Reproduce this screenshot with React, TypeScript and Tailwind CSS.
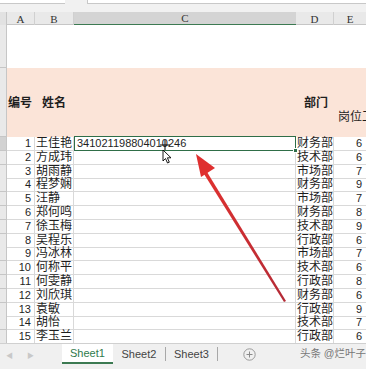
import React from "react";

const rows: [string, string, string][] = [
  ["王佳艳", "财务部", "6"],
  ["方成玮", "技术部", "6"],
  ["胡雨静", "市场部", "7"],
  ["程梦娴", "财务部", "9"],
  ["汪静", "市场部", "7"],
  ["郑何鸣", "财务部", "8"],
  ["徐玉梅", "技术部", "9"],
  ["吴程乐", "行政部", "6"],
  ["冯冰林", "市场部", "7"],
  ["何称平", "技术部", "6"],
  ["何雯静", "行政部", "8"],
  ["刘欣琪", "财务部", "6"],
  ["袁敏", "行政部", "9"],
  ["胡怡", "技术部", "7"],
  ["李玉兰", "行政部", "6"],
];

const font = { fontFamily: '"Liberation Sans","Noto Sans CJK SC",sans-serif' };

export default function App() {
  return (
    <div
      className="relative w-[366px] h-[369px] overflow-hidden bg-white text-[#1e1e1e]"
      style={font}
    >
      {/* top strip */}
      <div className="h-[12px] bg-[#f1f1f1] flex items-start gap-[22px]">
        <div className="w-[65px] h-[4px] bg-white border-b border-[#c8c8c8]" />
        <div className="flex-1 h-[4px] bg-white border-b border-[#c8c8c8] border-l" />
      </div>
      {/* column header */}
      <div
        className="grid grid-cols-[7px_28px_39px_222px_38px_1fr] h-[13px] bg-[#e9e9e9] border-b border-[#c6c6c6] text-[11px] leading-[12px] text-[#333]"
        style={{ fontFamily: '"Liberation Serif",serif' }}
      >
        <div className="border-r border-[#c6c6c6] bg-[#e2e2e2]" />
        <div className="border-r border-[#d0d0d0] flex items-center justify-center">A</div>
        <div className="border-r border-[#d0d0d0] flex items-center justify-center">B</div>
        <div className="bg-[#d4d4d4] border-b-2 border-[#3c7a52] flex items-center justify-center">C</div>
        <div className="border-r border-[#d0d0d0] flex items-center justify-center">D</div>
        <div className="flex items-center justify-center">E</div>
      </div>
      {/* row 1 blank */}
      <div className="grid grid-cols-[7px_1fr] h-[43px]">
        <div className="bg-[#e9e9e9] border-r border-b border-[#c6c6c6]" />
        <div className="bg-white" />
      </div>
      {/* row 2 header */}
      <div className="grid grid-cols-[7px_28px_39px_222px_38px_1fr] h-[69px] bg-[#fbe4d8]">
        <div className="bg-[#e9e9e9] border-r border-b border-[#c6c6c6]" />
        <div className="flex items-center pl-[1px] text-[12px] font-bold">编号</div>
        <div className="flex items-center pl-[7px] text-[12px] font-bold">姓名</div>
        <div />
        <div className="flex items-center pl-[8px] text-[12px] font-bold">部门</div>
        <div className="flex items-center pt-[28px] pl-[4px] text-[12px] whitespace-nowrap">岗位工资</div>
      </div>
      {/* data rows */}
      {rows.map(([name, dept, val], i) => (
        <div
          key={i}
          className="grid grid-cols-[7px_28px_39px_222px_38px_1fr] h-[13.8px] text-[12px] leading-[13px]"
        >
          <div
            className={`border-r border-b border-[#c6c6c6] ${i === 0 ? "bg-[#d2d2d2]" : "bg-[#e9e9e9]"}`}
          />
          <div className="border-r border-b border-[#d9d9d9] text-right pr-[3px] text-[11px] flex items-center justify-end">
            {i + 1}
          </div>
          <div className="border-r border-b border-[#d9d9d9] flex items-center pl-[1px] whitespace-nowrap">
            {name}
          </div>
          <div
            className={`border-b border-r flex items-center ${i === 0 ? "border border-[#2f6e48] relative -mt-px" : "border-[#d9d9d9]"}`}
          >
            {i === 0 && (
              <>
                <span className="pl-[2px] text-[11px] tracking-[0px]">341021198804010246</span>
                <span className="absolute -right-[3px] -bottom-[3px] w-[5px] h-[5px] bg-[#2f6e48] border border-white" />
              </>
            )}
          </div>
          <div className="border-r border-b border-[#d9d9d9] flex items-center pl-[1px] whitespace-nowrap">
            {dept}
          </div>
          <div className="border-b border-[#d9d9d9] flex items-center pl-[22px] text-[11px]">
            {val}
          </div>
        </div>
      ))}
      {/* tab bar */}
      <div className="absolute left-0 right-0 bottom-0 h-[26px] bg-[#f0f0f0] border-t border-[#d0d0d0] flex items-start text-[11px]">
        <div className="w-[62px] h-full flex items-center gap-[14px] pl-[6px] text-[#c8c8c8] text-[7px]">
          <span>◀</span>
          <span>▶</span>
        </div>
        <div className="w-[51px] h-[20px] bg-white border-b-2 border-[#3c7a52] flex items-center justify-center text-[#2f7a4c]">
          Sheet1
        </div>
        <div className="w-[53px] h-[20px] flex items-center justify-center text-[#444] border-r border-[#a8a8a8] my-[3px] !h-[14px]">
          Sheet2
        </div>
        <div className="w-[52px] h-[14px] my-[3px] flex items-center justify-center text-[#444] border-r border-[#a8a8a8]">
          Sheet3
        </div>
        <div className="w-[64px] h-[20px] flex items-center justify-center">
          <svg width="13" height="13" viewBox="0 0 13 13">
            <circle cx="6.5" cy="6.5" r="5.7" fill="none" stroke="#9a9a9a" strokeWidth="1" />
            <path d="M6.5 3.5v6M3.5 6.5h6" stroke="#8a8a8a" strokeWidth="1" />
          </svg>
        </div>
        <div className="h-[20px] flex items-center pl-[18px] text-[#777] text-[10.5px] whitespace-nowrap">
          头条 @烂叶子
        </div>
      </div>
      {/* red arrow */}
      <svg className="absolute left-0 top-0 pointer-events-none" width="366" height="369">
        <defs>
          <linearGradient id="ag" x1="0" y1="0" x2="1" y2="1">
            <stop offset="0" stopColor="#e0312f" />
            <stop offset="1" stopColor="#b32a36" />
          </linearGradient>
        </defs>
        <path d="M207 172 L286 301 L284 302 L204 174 Z" fill="url(#ag)" />
        <path d="M196 154 L215 168 L201 177 Z" fill="#df2f2f" />
      </svg>
      {/* mouse cursor */}
      <svg className="absolute left-[162px] top-[149px] pointer-events-none" width="12" height="16" viewBox="0 0 12 16">
        <path d="M1 1 L1 12 L3.5 9.5 L5.5 14 L7.3 13.2 L5.4 8.8 L9 8.8 Z" fill="#fff" stroke="#000" strokeWidth="0.9" strokeLinejoin="round" />
      </svg>
      <svg className="absolute left-[159px] top-[139px] pointer-events-none" width="12" height="12" viewBox="0 0 12 12">
        <path d="M6 1v10M1 6h10" stroke="#000" strokeWidth="1" />
      </svg>
    </div>
  );
}
